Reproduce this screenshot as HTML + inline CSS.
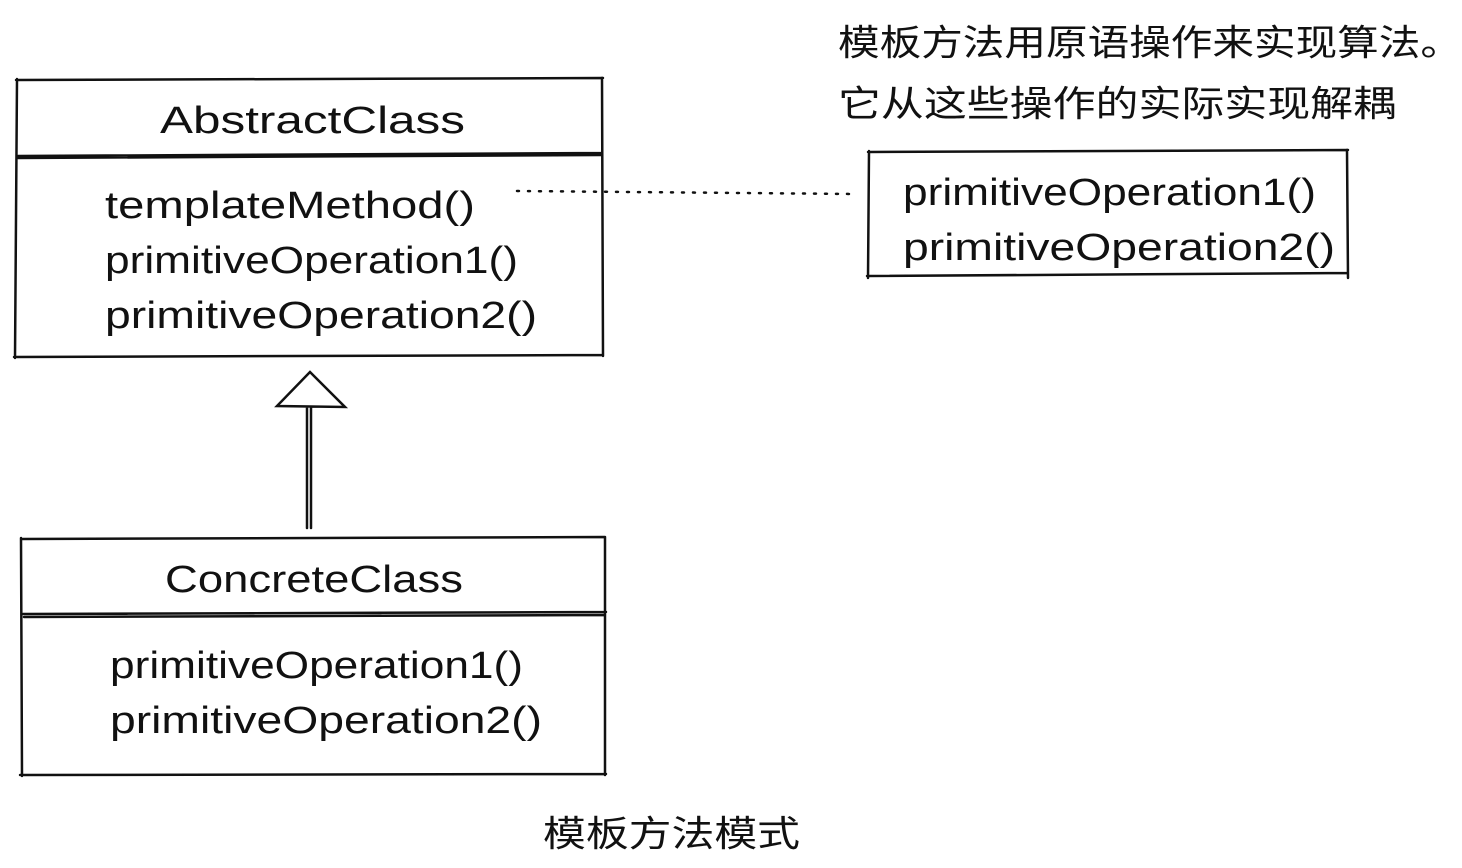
<!DOCTYPE html>
<html><head><meta charset="utf-8"><style>
html,body{margin:0;padding:0;background:#fff;width:1462px;height:868px;overflow:hidden}
svg{display:block}
.t{font-family:"Liberation Sans",sans-serif;font-size:38px;fill:#111}
.c{font-family:"Liberation Sans","Noto Sans CJK SC",sans-serif;font-size:36px;fill:#111}
</style></head><body>
<svg width="1462" height="868" xmlns="http://www.w3.org/2000/svg">
<g fill="none" stroke="#111" stroke-width="2.5" stroke-linecap="round">
<!-- box1 -->
<path d="M16 80 L603 78 M17 79 L15 358 M14 357 L603 355 M602 78 L603 356 M18 156 L602 153 M18 158 L601 155"/>
<!-- box2 -->
<path d="M21 539 L605 537 M21 538 L22 776 M20 775 L606 774 M605 537 L605 775 M23 614 L606 612 M24 617 L605 615"/>
<!-- box3 -->
<path d="M868 152 L1348 150 M869 151 L868 278 M867 276 L1347 273 M1347 150 L1348 278"/>
<!-- inheritance -->
<path d="M310 372 L277 406 L345 407 Z M307 407 L307 528 M311 407 L311 528"/>
<path d="M517 191 L855 194" stroke-dasharray="2 9" stroke-width="2.5"/>
</g>
<text class="t" x="160" y="133" textLength="305" lengthAdjust="spacingAndGlyphs">AbstractClass</text>
<text class="t" x="105" y="218" textLength="370" lengthAdjust="spacingAndGlyphs">templateMethod()</text>
<text class="t" x="105" y="273" textLength="413" lengthAdjust="spacingAndGlyphs">primitiveOperation1()</text>
<text class="t" x="105" y="328" textLength="432" lengthAdjust="spacingAndGlyphs">primitiveOperation2()</text>
<text class="t" x="165" y="592" textLength="298" lengthAdjust="spacingAndGlyphs">ConcreteClass</text>
<text class="t" x="110" y="678" textLength="413" lengthAdjust="spacingAndGlyphs">primitiveOperation1()</text>
<text class="t" x="110" y="733" textLength="432" lengthAdjust="spacingAndGlyphs">primitiveOperation2()</text>
<text class="t" x="903" y="205" textLength="413" lengthAdjust="spacingAndGlyphs">primitiveOperation1()</text>
<text class="t" x="903" y="260" textLength="432" lengthAdjust="spacingAndGlyphs">primitiveOperation2()</text>
<text class="c" x="838" y="55" textLength="624" lengthAdjust="spacingAndGlyphs">模板方法用原语操作来实现算法。</text>
<text class="c" x="838" y="116" textLength="558" lengthAdjust="spacingAndGlyphs">它从这些操作的实际实现解耦</text>
<text class="c" x="543" y="846" textLength="257" lengthAdjust="spacingAndGlyphs">模板方法模式</text>
</svg>
</body></html>
